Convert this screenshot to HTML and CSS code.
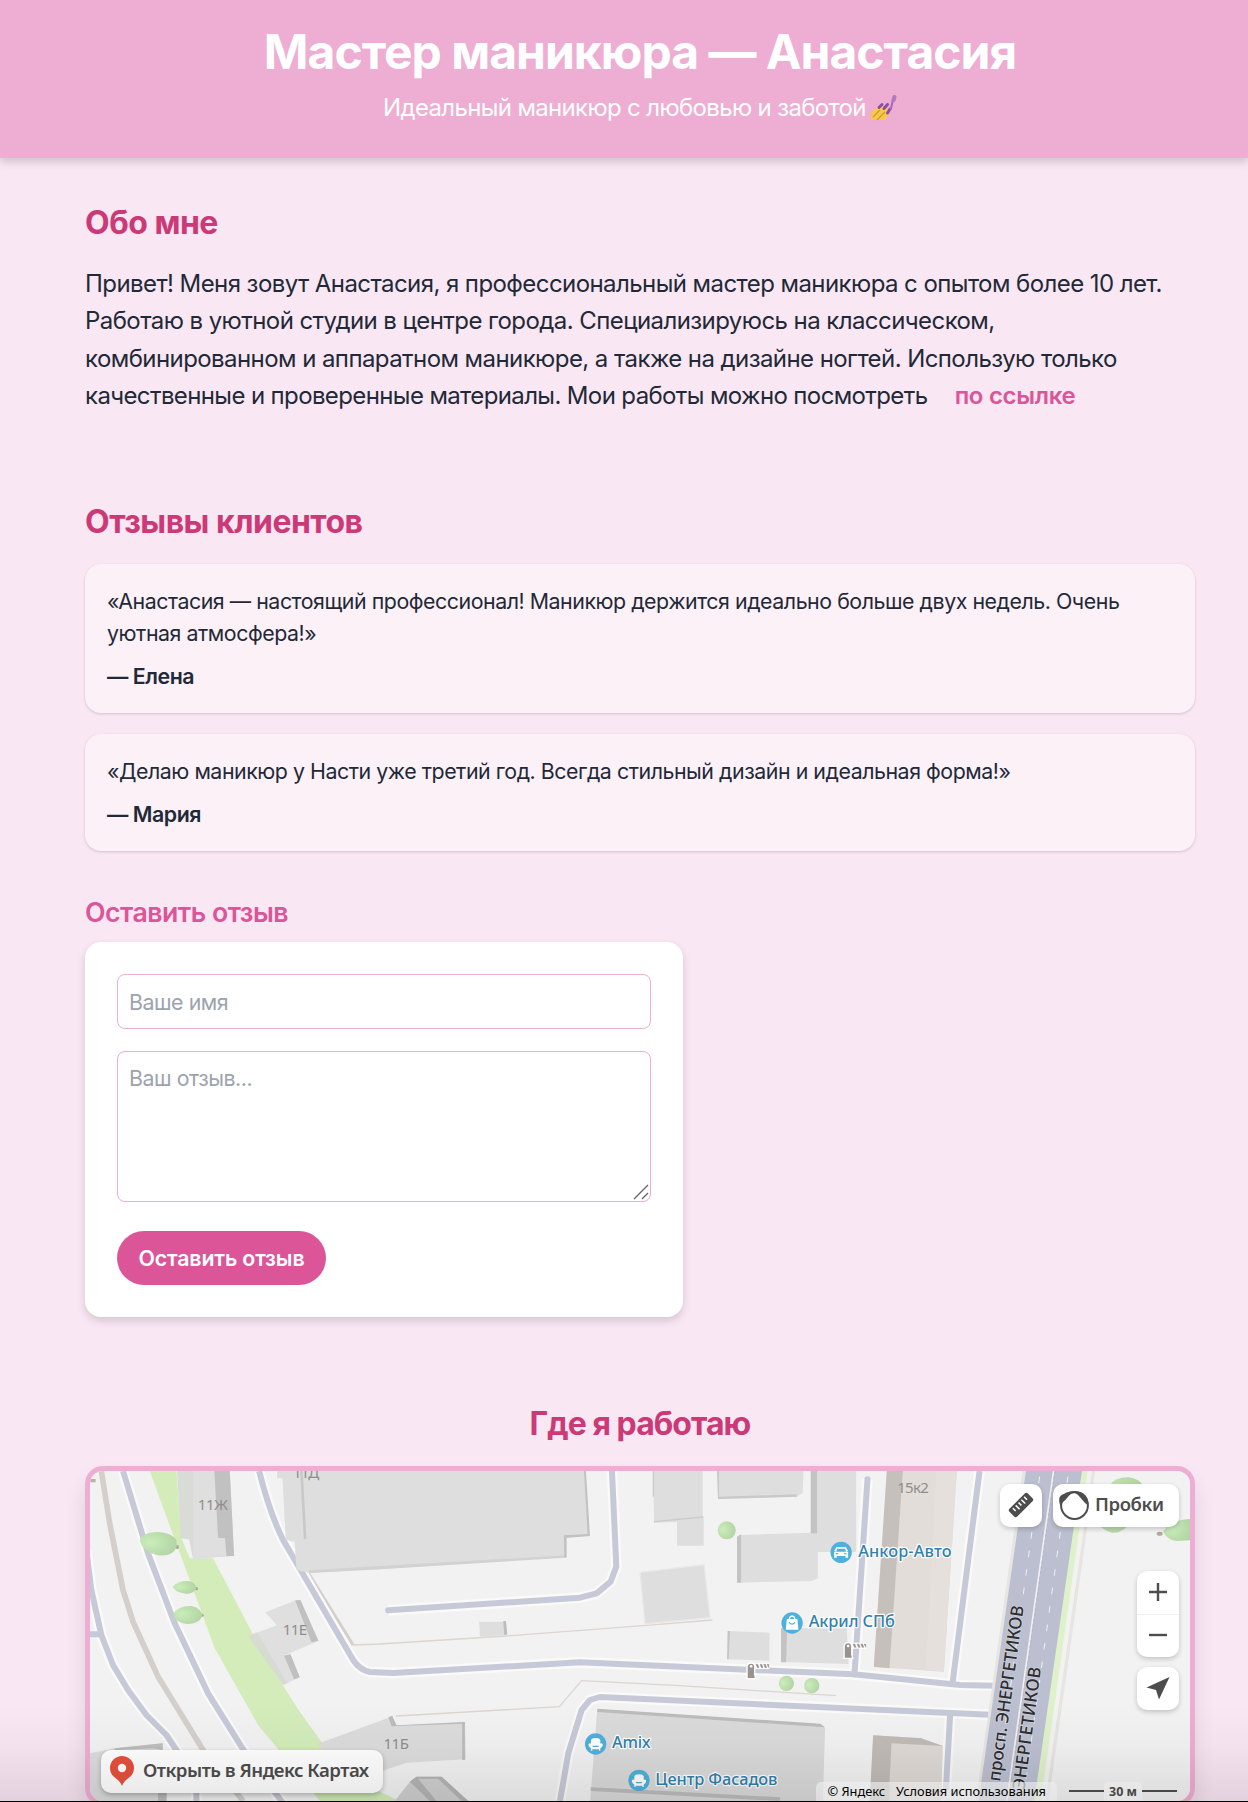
FILE: index.html
```html
<!DOCTYPE html>
<html lang="ru">
<head>
<meta charset="utf-8">
<title>Мастер маникюра — Анастасия</title>
<link rel="stylesheet" href="styles.css">
</head>
<body>
<header class="hero">
  <h1 class="hero-title">Мастер маникюра — Анастасия</h1>
  <p class="hero-subtitle"><span>Идеальный маникюр с любовью и заботой</span>
    <svg class="polish" viewBox="0 0 26 26" aria-label="маникюр">
      <path d="M0 18 L6 12 Q9 10 11 12 Q14 10 16 13 Q20 15 18 19 L14 25 H0 Z" fill="#f7c948"/>
      <path d="M2 22 L9 15 M6 25 L14 17" stroke="#d6962f" stroke-width="1.200"/>
      <path d="M8 12.500 L11 9.500 M13 13.500 L16.500 9.500 M16.500 18 L19 14" stroke="#8a4fa3" stroke-width="3" stroke-linecap="round"/>
      <path d="M19.500 15 L22 5" stroke="#a868c0" stroke-width="2"/>
      <path d="M22.500 5 L23.500 2" stroke="#b07abf" stroke-width="4" stroke-linecap="round"/>
    </svg>
  </p>
</header>
<main class="content">
  <section class="about">
    <h2 class="heading">Обо мне</h2>
    <p class="about-text">Привет! Меня зовут Анастасия, я профессиональный мастер маникюра с опытом более 10 лет.<br>Работаю в уютной студии в центре города. Специализируюсь на классическом,<br>комбинированном и аппаратном маникюре, а также на дизайне ногтей. Использую только<br><span class="tight">качественные и проверенные материалы. Мои работы можно посмотреть</span> <a class="link" href="#">по ссылке</a></p>
  </section>
  <section class="reviews">
    <h2 class="heading">Отзывы клиентов</h2>
    <div class="review-list">
      <article class="review">
        <p>«Анастасия — настоящий профессионал! Маникюр держится идеально больше двух недель. Очень<br>уютная атмосфера!»</p>
        <p class="author">— Елена</p>
      </article>
      <article class="review">
        <p>«Делаю маникюр у Насти уже третий год. Всегда стильный дизайн и идеальная форма!»</p>
        <p class="author">— Мария</p>
      </article>
    </div>
    <h3 class="subheading">Оставить отзыв</h3>
    <form class="review-form">
      <input class="field" type="text" placeholder="Ваше имя">
      <div class="area-wrap">
        <textarea class="field area" placeholder="Ваш отзыв..."></textarea>
        <svg class="grip" viewBox="0 0 16 16"><path d="M1 15 15 1M9 15l6-6" stroke="#666" stroke-width="1.4"/></svg>
      </div>
      <button class="submit" type="button">Оставить отзыв</button>
    </form>
  </section>
  <section class="place">
    <h2 class="heading centered">Где я работаю</h2>
    <div class="map">
      <svg class="map-canvas" viewBox="31 243 3298 990" preserveAspectRatio="none">
        <rect x="0" y="200" width="3400" height="1100" fill="#f2f2f2"/>
        <path d="M210 243H290L305 445 330 505H400L560 810 660 965 800 1160 960 1233H720L595 1078 535 1005 405 775Z" fill="#d3ecba"/>
        <path d="M30 272H48" stroke="#c0b09c" stroke-width="10"/>
        <!-- footpaths -->
        <g fill="none" stroke="#d4cfca" stroke-width="17">
          <path d="M65 243 90 400 130 600 160 695 235 860 370 1080 490 1233"/>
          <path d="M685 548 820 765" stroke-width="9"/>
        </g>
        <g fill="none" stroke="#ddd5ce" stroke-width="4">
          <path d="M820 765 900 762 1280 738 1700 706 1897 690"/>
          <path d="M948 978 1438 950 1505 872 1800 887 2268 917"/>
        </g>
        <!-- driveways: light casing under a blue-grey line -->
        <g fill="none" stroke="#fbfaf8" stroke-width="32" stroke-linejoin="round">
          <path d="M20 480 35 600 65 735 100 825 145 900 200 975 260 1035 310 1110 350 1210V1240"/>
          <path d="M130 243 205 490 285 700 385 910 490 1078 610 1240"/>
          <path d="M538 243C560 330 580 390 610 450L820 810Q840 840 870 846L940 849 1500 817 2320 853 2640 885 2745 887"/>
          <path d="M1596 243 1609 530 1592 575 1550 610 1500 623 925 661"/>
          <path d="M1440 1233 1465 1090 1505 960 1530 930 1560 921 2745 975"/>
          <path d="M2362 268 2323 853M2698 243 2617 880M2610 970 2597 1200"/>
        </g>
        <g fill="none" stroke="#c6cad8" stroke-width="18" stroke-linejoin="round">
          <path d="M20 480 35 600 65 735 100 825 145 900 200 975 260 1035 310 1110 350 1210V1240M25 733H65"/>
          <path d="M130 243 205 490 285 700 385 910 490 1078 610 1240"/>
          <path d="M538 243C560 330 580 390 610 450L820 810Q840 840 870 846L940 849 1500 817 2320 853 2640 885 2745 887"/>
          <path d="M1596 243 1609 530 1592 575 1550 610 1500 623 925 661" stroke-linecap="round"/>
          <path d="M1440 1233 1465 1090 1505 960 1530 930 1560 921 2745 975"/>
          <path d="M2362 268 2323 853" stroke-linecap="round"/>
          <path d="M2698 243 2617 880M2610 970 2597 1200"/>
        </g>
        <!-- buildings -->
        <path d="M292 243H450L463 498 340 506 328 448 303 445Z" fill="#d9dbd7"/>
        <path d="M340 243H405L415 443 438 445 440 498 340 506Z" fill="#dfdfdf"/>
        <path d="M404 243H450L463 498 440 498 436 445 415 443Z" fill="#c1c1c1"/>
        <path d="M592 243H1517L1528 438 1455 443 1459 500 900 538 688 549 650 540 645 455 618 450 608 265H592Z" fill="#dedede"/>
        <path d="M661 243H669L680 446 672 448Z" fill="#c9c9c9"/>
        <path d="M688 549 900 538 1459 503V496L900 528 688 541Z" fill="#d2d2d2"/>
        <path d="M1512 243H1518L1530 438 1452 444V436L1523 432ZM1452 440H1460V502H1453Z" fill="#c2c2c2"/>
        <path d="M557 667 650 630 716 753 612 797 632 793 660 862 610 885 505 738 591 706Z" fill="#dfdfdf"/>
        <path d="M646 631 662 630 716 752 695 757ZM613 797 632 793 660 862 643 868Z" fill="#c0c0c0"/>
        <path d="M505 738 532 727 622 880 610 885Z" fill="#d7dcd2"/>
        <path d="M105 1075 249 1060V1233H30V1090Z" fill="#dcdcdc"/>
        <path d="M105 1075 249 1060V1080L222 1075 105 1081ZM235 1200H261V1233H235Z" fill="#bdbdbd"/>
        <path d="M712 1062 930 982 950 1008 1155 996 1158 1108 980 1118 900 1145 800 1140Z" fill="#dcdcdc"/>
        <path d="M926 982 937 977 950 1006 1155 996V1110H1147V1001L935 1009Z" fill="#bcbcbc"/>
        <path d="M945 1233 990 1175 1010 1160H1085L1165 1233Z" fill="#cfcfcf"/>
        <path d="M990 1175 1010 1160H1085L1165 1233H1145L1075 1166H1015L1070 1233H1050Z" fill="#b4b4b4"/>
        <path d="M1198 695H1278L1282 735 1200 740Z" fill="#dedede"/><path d="M1270 693H1278L1282 733 1273 735Z" fill="#bdbdbd"/>
        <path d="M1720 243H1868V382H1871V467H1791V396L1722 398Z" fill="#dedede"/>
        <path d="M1720 243V320M1722 395 1870 381" stroke="#cbcbcb" stroke-width="4"/>
        <path d="M1680 547 1872 524 1890 683 1695 702Z" fill="#dedede" stroke="#e9e9e9" stroke-width="4"/>
        <path d="M1911 243H2170L2168 308 2150 320 1914 327Z" fill="#dedede"/><path d="M1911 243H1917V320L2150 313V320L1914 327Z" fill="#c9c9c9"/>
        <path d="M2192 243H2328V486H2213V565L2195 573 1973 578 1980 435 2192 428Z" fill="#dedede"/>
        <path d="M2192 243H2211V430H2192ZM1971 440 1983 433V578H1971Z" fill="#c3c3c3"/>
        <path d="M1943 723 2068 728V812L1942 808Z" fill="#dedede"/><path d="M1943 723H1950L1946 808H1941Z" fill="#c5c5c5"/>
        <path d="M2105 715H2300L2305 822 2105 816Z" fill="#dedede"/><path d="M2103 715H2121L2118 817H2103Z" fill="#c3c3c3"/>
        <path d="M2420 243H2630L2591 845 2381 831Z" fill="#e2ddd8"/>
        <path d="M2420 243H2468L2428 835 2381 830Z" fill="#c6c0bc"/><path d="M2568 243H2630L2591 845 2537 842Z" fill="#e6e0dd"/>
        <path d="M1552 958 2220 1003 2235 1015 2228 1240H1530Z" fill="#dadada"/>
        <path d="M1552 956 2220 1001 2235 1012 1552 966ZM1532 1192 1740 1202 2100 1222V1233L1532 1203Z" fill="#bcbcbc"/>
        <path d="M2379 1036 2523 1045 2588 1068 2583 1233H2369Z" fill="#dfd9d5"/><path d="M2379 1036 2523 1045 2588 1068 2434 1060 2428 1180V1233H2369Z" fill="#c1bbb7"/>
        <!-- avenue -->
        <path d="M2832 243 2692 1233M3040 243 2900 1233" stroke="#e7e5e2" stroke-width="10"/>
        <path d="M2837 243H3007L2866 1233H2695Z" fill="#bbbfd0"/>
        <path d="M3005 243H3022L2882 1233H2862Z" fill="#dff1ca"/>
        <path d="M2920 243 2780 1233" stroke="#f1f1f4" stroke-width="5"/><path d="M2924 243 2784 1233" stroke="#aeb2c4" stroke-width="2" stroke-dasharray="8 8"/>
        <path d="M2878 260 2748 1200M2963 260 2833 1200" stroke="#eff0f4" stroke-width="3" stroke-dasharray="20 36"/>
        <!-- trees -->
        <defs><radialGradient id="leaf" cx=".3" cy=".45" r=".7"><stop offset="0" stop-color="#caedbb"/><stop offset="1" stop-color="#b3d4a4"/></radialGradient></defs>
        <g fill="#b5a696"><circle cx="292" cy="471" r="6"/><circle cx="350" cy="596" r="5"/><circle cx="367" cy="676" r="5"/><ellipse cx="3238" cy="431" rx="9" ry="6"/></g>
        <g fill="url(#leaf)"><path d="M180 452Q190 426 235 426 275 428 290 450 295 480 275 490 260 499 235 496 190 486 180 452Z"/><path d="M279 590Q295 572 325 573 350 578 349 596 340 612 318 611 285 606 279 590Z"/><path d="M281 672Q295 647 335 648 366 656 368 678 358 702 322 702 285 698 281 672Z"/><circle cx="1940" cy="421" r="27"/><circle cx="2119" cy="880" r="23"/><circle cx="2195" cy="887" r="23"/><path d="M3085 290Q3100 262 3145 262 3190 270 3190 300L3140 410Q3120 430 3095 428 3060 418 3050 395Z"/><path d="M3248 425Q3265 390 3335 387V450L3290 453Q3260 450 3248 425Z"/></g>
        <!-- labels -->
        <g class="house"><text x="354" y="361" textLength="90">11Ж</text><text x="640" y="263" textLength="78">11Д</text><text x="609" y="736" textLength="73">11Е</text><text x="911" y="1078" textLength="76">11Б</text><text x="2451" y="309" textLength="95">15к2</text></g>
        <g class="poi"><text x="2334" y="501" textLength="280">Анкор-Авто</text><text x="2186" y="712" textLength="258">Акрил СПб</text><text x="1596" y="1074" textLength="116">Amix</text><text x="1726" y="1184" textLength="366">Центр Фасадов</text></g>
        <g fill="#4fb0dc"><circle cx="2283" cy="487" r="32"/><circle cx="2136" cy="699" r="32"/><circle cx="1547" cy="1062" r="32"/><circle cx="1677" cy="1171" r="32"/></g>
        <g fill="#fff"><path fill-rule="evenodd" d="M2268 472H2298L2304 486V503H2296V498H2270V503H2262V486ZM2271 476 2268 485H2298L2295 476ZM2267 489V493H2274V489ZM2292 489V493H2299V489ZM2262 481 2267 484 2264 487ZM2304 481 2299 484 2302 487Z"/>
          <path d="M2120 687H2152L2155 719H2117Z"/><path d="M2128 688V685Q2130 678 2136 678 2142 678 2144 685V688" fill="none" stroke="#fff" stroke-width="4"/><path d="M2127 697Q2136 708 2145 697" fill="none" stroke="#4fb0dc" stroke-width="4"/></g>
        <g id="sofa" fill="#fff"><path d="M1533 1060V1050Q1535 1044 1547 1044T1561 1050V1060L1556 1067H1538ZM1526 1062Q1530 1057 1535 1062L1539 1071H1555L1559 1062Q1564 1057 1568 1062 1570 1069 1561 1075V1082H1557V1078H1537V1082H1533V1075Q1524 1069 1526 1062Z"/></g>
        <use href="#sofa" x="130" y="109"/>
        <g id="gate"><path d="M2001 862V828Q2003 819 2013 819T2024 828V855L2027 866H1999Z" fill="#99938e" stroke="#fff" stroke-width="4"/><circle cx="2013" cy="829" r="4" fill="#fff"/><path d="M2026 828H2068" stroke="#fff" stroke-width="18"/><path d="M2028 823H2033L2037 833H2032ZM2040 823H2045L2049 833H2044ZM2051 823H2056L2060 833H2055ZM2061 823H2066V833Z" fill="#99938e" stroke="#99938e" stroke-width="1.500"/></g>
        <use href="#gate" x="291" y="-61"/>
        <g class="street"><text transform="translate(2759 1176) rotate(-82.3)" textLength="532">просп. ЭНЕРГЕТИКОВ</text><text transform="translate(2833 1200) rotate(-82.3)" textLength="370">ЭНЕРГЕТИКОВ</text></g>
      </svg>
      <div class="map-top">
        <button class="chip ruler" type="button" aria-label="Линейка"><svg viewBox="0 0 26 26"><g transform="rotate(-45 13 13)"><rect x="0" y="7.500" width="26" height="11" rx="2.2" fill="#4d4d4d"/><path d="M5 9.500v4M9 9.500v5.500M13 9.500v4M17 9.500v5.500M21 9.500v4" stroke="#fff" stroke-width="1.5"/></g></svg></button>
        <button class="chip traffic" type="button"><svg viewBox="0 0 32 32"><circle cx="16.5" cy="16.5" r="13.400" fill="none" stroke="#4d4d4d" stroke-width="2"/><path d="M2.500 17C-.5 9 2 6 6 5 10 1.500 22 1 26 5 29 8 31 11 30 16 26 14 24 10 20 6 18 4 15 4 13 5 10 7 8 11 5 13Z" fill="#4d4d4d"/></svg><span>Пробки</span></button>
      </div>
      <div class="map-side">
        <div class="zoom-box"><button type="button" aria-label="Приблизить"><svg viewBox="0 0 20 20"><path d="M10 1v18M1 10h18" stroke="#4d4d4d" stroke-width="2.400"/></svg></button><button type="button" aria-label="Отдалить"><svg viewBox="0 0 20 20"><path d="M1 10h18" stroke="#4d4d4d" stroke-width="2.400"/></svg></button></div>
        <button class="chip locate" type="button" aria-label="Моё местоположение"><svg viewBox="0 0 24 24"><path d="M0.500 11.500 23.500 1 13 23.500 10 14Z" fill="#4d4d4d"/></svg></button>
      </div>
      <a class="open-map" href="#"><svg viewBox="0 0 24 30"><path d="M12 0a12 12 0 0 1 12 12c0 7-5 9.500-8.500 12.500C13.500 26.500 13 28 12 30c-1-2-1.500-3.500-3.500-5.500C5 21.500 0 19 0 12A12 12 0 0 1 12 0Z" fill="#e5503c"/><circle cx="12" cy="12" r="4.200" fill="#fff"/></svg><span>Открыть в Яндекс Картах</span></a>
      <div class="map-foot"><div class="legal"><span>© Яндекс</span><span>Условия использования</span></div><div class="scale"><i></i><b>30 м</b><i></i></div></div>
    </div>
  </section>
</main>
<div class="bottom-fade"></div>
</body>
</html>
```
FILE: styles.css
```css
*{box-sizing:border-box}
body{margin:0;position:relative;height:1802px;overflow:hidden;background:#f9e7f3;color:#1f2937;font-family:Inter,"Liberation Sans",sans-serif;font-size:21.33px;line-height:32px}
h1,h2,h3,p{margin:0}
button{border:0;padding:0;font-family:inherit}
.hero{height:158px;padding:25px 0 0 32px;background:#eeadd2;color:#fff;text-align:center;box-shadow:0 4px 8px rgba(0,0,0,.16)}
.hero-title{font-size:48px;line-height:53px;font-weight:700;letter-spacing:-1px}
.hero-subtitle{display:flex;justify-content:center;align-items:center;gap:5px;margin-top:11px;font-size:24px;line-height:37px;letter-spacing:-.66px}
.polish{width:26px;height:26px}
.content{width:1110px;margin-left:85px;padding-top:43px}
.heading{font-size:32px;line-height:43px;font-weight:700;letter-spacing:-.5px;color:#cb3a76}
.centered{padding-top:1px;line-height:42px;letter-spacing:-.95px;text-align:center}
.about-text{margin-top:21px;font-size:24px;line-height:37.4px;letter-spacing:-.57px;white-space:nowrap}
.tight{letter-spacing:-.62px}
.link{margin-left:21px;color:#db5598;font-weight:600;letter-spacing:-.3px;text-decoration:none}
.reviews{margin-top:85.4px}
.review-list{display:grid;gap:21px;margin-top:21px}
.review{padding:21px 22px;border-radius:16px;background:#fcf1f7;box-shadow:0 1px 3px rgba(0,0,0,.16);letter-spacing:-.45px;white-space:nowrap}
.author{margin-top:11px;font-weight:600}
.subheading{margin-top:42.6px;font-size:26.67px;line-height:37px;font-weight:600;letter-spacing:-.5px;color:#db5598}
.review-form{display:flex;flex-direction:column;align-items:flex-start;width:598px;height:375px;margin-top:11px;padding:32px;border-radius:16px;background:#fff;box-shadow:0 4px 8px rgba(0,0,0,.14)}
.field{display:block;width:534px;height:55px;padding:11px 11px 10px;border:1px solid #eeadd2;border-radius:8px;background:#fff;font:inherit;letter-spacing:-.45px;outline:0}
.field::placeholder{color:#9ca3af;opacity:1}
.area-wrap{position:relative;margin-top:22px}
.area{height:151px;padding-top:10px;resize:none}
.grip{position:absolute;right:2px;bottom:2px;width:16px;height:16px}
.submit{width:209px;height:54px;margin-top:29px;border-radius:27px;background:#db5598;color:#fff;font-size:21.33px;font-weight:600;letter-spacing:-.15px}
.place{margin-top:85px}
.map{position:relative;height:340px;margin-top:21px;border:5px solid #eeadd2;border-radius:18px;overflow:hidden;box-shadow:0 13px 20px rgba(0,0,0,.1);font-family:"Noto Sans",sans-serif;color:#4d4d4d}
.map-canvas{display:block;width:100%;height:330px}
.house{font-size:45px;fill:#8e8e8e}
.poi{font-size:49px;font-weight:500;fill:#3380ab;stroke:#fff;stroke-width:7px;paint-order:stroke;stroke-linejoin:round}
.street{font-size:52px;font-weight:500;fill:#2e2e2e;stroke:#d4d7e2;stroke-width:4px;paint-order:stroke}
.chip{display:flex;align-items:center;justify-content:center;width:42px;height:43px;border-radius:10px;background:#fff;box-shadow:0 2px 5px rgba(0,0,0,.2);color:#4d4d4d}
.map-top{position:absolute;top:13px;right:11px;display:flex;gap:11px}
.ruler svg{width:26px;height:26px}
.traffic{width:126px;justify-content:flex-start;padding-left:5px;gap:5px;font-size:18.5px;font-weight:600;line-height:30px;letter-spacing:-.4px}
.traffic span{padding-bottom:3px}
.traffic svg{width:32px;height:32px}
.map-side{position:absolute;top:100px;right:11px;display:grid;gap:10px}
.zoom-box{display:grid;grid-template-rows:43px 43px;width:42px;border-radius:10px;background:#fff;box-shadow:0 2px 5px rgba(0,0,0,.2)}
.zoom-box button{display:grid;place-items:center;background:none}
.zoom-box button+button{border-top:1px solid #f0f0f0;padding-bottom:2px}
.zoom-box svg{width:20px;height:20px}
.locate svg{width:24px;height:24px}
.open-map{position:absolute;left:11px;top:279px;display:flex;align-items:center;gap:9px;width:282px;height:43px;padding-left:9px;border-radius:10px;background:#fff;box-shadow:0 2px 5px rgba(0,0,0,.25);color:#4d4d4d;font-size:18.6px;font-weight:600;letter-spacing:-.5px;white-space:nowrap;text-decoration:none}
.open-map span{padding-bottom:2px}
.open-map svg{width:24px;height:30px}
.map-foot{position:absolute;right:13px;top:311px;display:flex;align-items:center;gap:12px;height:19px;color:#000}
.legal{display:flex;gap:11px;height:19px;padding:0 11px;border-radius:5px 5px 0 0;background:rgba(255,255,255,.65);font-size:12.8px;line-height:19px;white-space:nowrap}
.scale{display:flex;align-items:center;color:#4d4d4d;font-size:12.5px}
.scale i{width:35px;height:2px;background:#4d4d4d}
.scale b{width:38px;height:19px;line-height:19px;text-align:center;background:rgba(255,255,255,.55);border-radius:4px 4px 0 0}
.bottom-fade{position:absolute;left:0;right:0;bottom:0;height:100px;border-bottom:1px solid #000;background:linear-gradient(rgba(0,0,0,0),rgba(0,0,0,.025) 45%,rgba(0,0,0,.09));pointer-events:none}
```
